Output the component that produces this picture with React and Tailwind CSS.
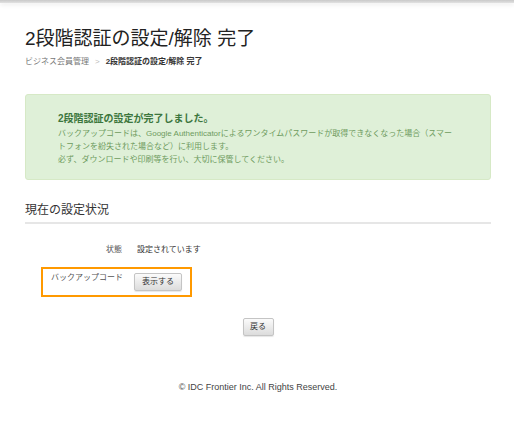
export default function App() {
  const font = { fontFamily: '"Liberation Sans", "Noto Sans CJK JP", sans-serif' };

  return (
    <div className="min-h-screen bg-white text-[#333]" style={font}>
      {/* top bar */}
      <div className="h-[3px] bg-gradient-to-b from-[#c9c9c9] to-[#e2e2e2] shadow-[0_2px_4px_rgba(0,0,0,0.08)]" />

      <div className="ml-[25px] w-[466px]">
        <h1 className="mt-[24px] text-[19px] leading-[24px] font-normal text-[#222]">2段階認証の設定/解除 完了</h1>

        <div className="mt-[5px] flex items-center text-[8px] leading-[12px]">
          <span className="text-[#777]">ビジネス会員管理</span>
          <span className="mx-[6px] text-[#bbb]">&gt;</span>
          <span className="font-bold text-[#333]">2段階認証の設定/解除 完了</span>
        </div>

        {/* success message */}
        <div className="mt-[26px] rounded-[3px] border border-[#d6e9c6] bg-[#dff0d8] pt-[17px] pb-[13px] pl-[32px]">
          <p className="text-[10px] leading-[14px] font-bold text-[#3c763d]">2段階認証の設定が完了しました。</p>
          <p className="mt-[1px] whitespace-nowrap text-[8px] leading-[13px] text-[#6e9b5e]">
            バックアップコードは、Google Authenticatorによるワンタイムパスワードが取得できなくなった場合（スマー
            <br />
            トフォンを紛失された場合など）に利用します。
            <br />
            必ず、ダウンロードや印刷等を行い、大切に保管してください。
          </p>
        </div>

        {/* current status */}
        <h2 className="mt-[22px] border-b-2 border-[#e6e6e6] pb-[4px] text-[12px] leading-[16px] font-normal text-[#333]">
          現在の設定状況
        </h2>

        <div className="mt-[20px] flex text-[8px] leading-[12px]">
          <div className="w-[97px] text-right text-[#555]">状態</div>
          <div className="ml-[15px] text-[#333]">設定されています</div>
        </div>

        <div className="mt-[11px] ml-[16px] flex h-[30px] w-[151px] items-start border-2 border-[#f90] text-[8px] leading-[12px]">
          <div className="ml-[8px] mt-[3px] text-[#555]">バックアップコード</div>
          <button className="ml-[11px] mt-[4px] h-[18px] w-[48px] rounded-[2px] border border-[#c4c4c4] bg-gradient-to-b from-[#fbfbfb] to-[#dcdcdc] text-[8px] text-[#333] shadow-[0_1px_1px_rgba(0,0,0,0.1)]">
            表示する
          </button>
        </div>

        <div className="mt-[21px] flex justify-center">
          <button className="h-[18px] w-[31px] rounded-[2px] border border-[#c4c4c4] bg-gradient-to-b from-[#fbfbfb] to-[#dcdcdc] text-[8px] text-[#333] shadow-[0_1px_1px_rgba(0,0,0,0.1)]">
            戻る
          </button>
        </div>

        <p className="mt-[45px] text-center text-[9px] leading-[12px] text-[#444]">© IDC Frontier Inc. All Rights Reserved.</p>
      </div>
    </div>
  );
}
